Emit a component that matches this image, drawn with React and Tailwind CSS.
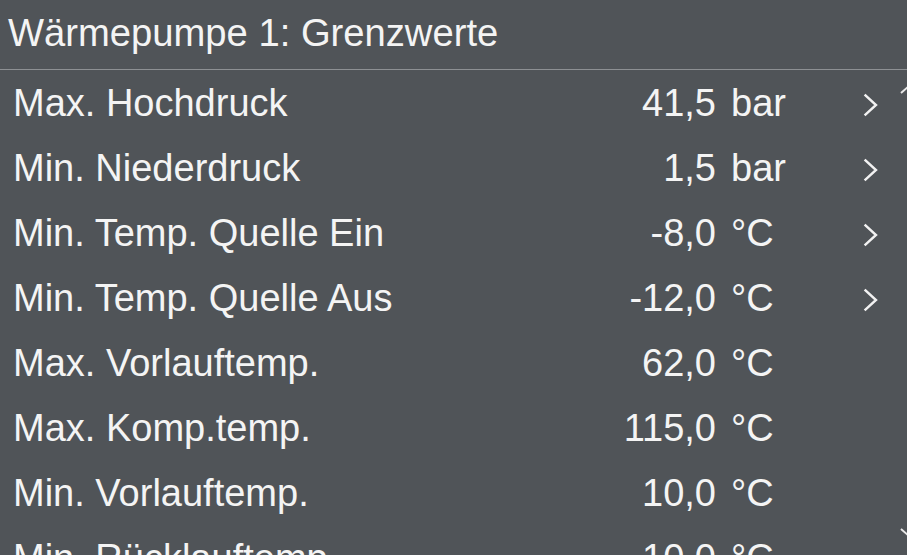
const rows = [
  { label: 'Max. Hochdruck', value: '41,5', unit: 'bar', link: true },
  { label: 'Min. Niederdruck', value: '1,5', unit: 'bar', link: true },
  { label: 'Min. Temp. Quelle Ein', value: '-8,0', unit: '°C', link: true },
  { label: 'Min. Temp. Quelle Aus', value: '-12,0', unit: '°C', link: true },
  { label: 'Max. Vorlauftemp.', value: '62,0', unit: '°C' },
  { label: 'Max. Komp.temp.', value: '115,0', unit: '°C' },
  { label: 'Min. Vorlauftemp.', value: '10,0', unit: '°C' },
  { label: 'Min. Rücklauftemp.', value: '10,0', unit: '°C' },
]

function Chevron() {
  return (
    <svg width="16" height="24" viewBox="0 0 16 24" fill="none" stroke="#f2f2f2" strokeWidth="2.4" strokeLinecap="square">
      <path d="M2.5 2.5 L13 12 L2.5 21.5" />
    </svg>
  )
}

export default function App() {
  return (
    <div
      className="relative w-[907px] h-[555px] overflow-hidden bg-[#505458] text-[#f4f4f4]"
      style={{ fontFamily: '"Liberation Sans", Arial, sans-serif' }}
    >
      {/* Header */}
      <div className="h-[70px] border-b border-[#8d9093] pl-[8px] flex items-center">
        <span className="text-[38.2px] leading-none pb-[3px]">Wärmepumpe 1: Grenzwerte</span>
      </div>

      {/* List */}
      <div className="flex flex-col">
        {rows.map(r => (
          <div key={r.label} className="h-[65px] shrink-0 flex items-center text-[38px] leading-none">
            <span className="pl-[13px] flex-1 whitespace-nowrap">{r.label}</span>
            <span className="w-[200px] text-right">{r.value}</span>
            <span className="pl-[15px] w-[143px]">{r.unit}</span>
            <span className="w-[24px] flex items-center justify-center pt-[4px]">
              {r.link && <Chevron />}
            </span>
            <span className="w-[24px]" />
          </div>
        ))}
      </div>

      {/* Scroll indicators */}
      <svg className="absolute left-[898px] top-[84px]" width="20" height="12" viewBox="0 0 20 12" fill="none" stroke="#e8e8e8" strokeWidth="2">
        <path d="M3 9 L11 2 L19 9" />
      </svg>
      <svg className="absolute left-[898px] top-[526px]" width="20" height="12" viewBox="0 0 20 12" fill="none" stroke="#e8e8e8" strokeWidth="2">
        <path d="M3 3 L11 10 L19 3" />
      </svg>
    </div>
  )
}
